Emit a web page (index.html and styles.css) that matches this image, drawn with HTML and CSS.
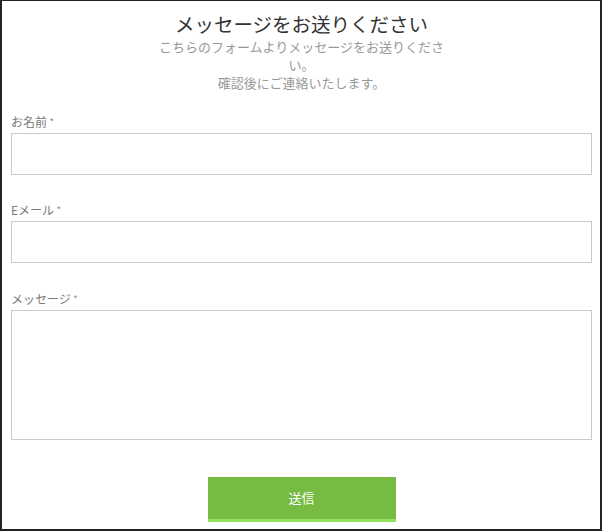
FILE: index.html
```html
<!DOCTYPE html>
<html lang="ja">
<head>
	<meta charset="UTF-8">
	<title>お問い合わせ</title>
	<link rel="stylesheet" href="styles.css">
</head>
<body>
	<div class="frame">
		<div class="head">
			<h1 class="title">メッセージをお送りください</h1>
			<p class="lead">こちらのフォームよりメッセージをお送りください。<br>確認後にご連絡いたします。</p>
		</div>

		<form class="contact">
			<div class="field">
				<label class="label" for="name">お名前<span class="req">*</span></label>
				<input class="input" type="text" id="name">
			</div>
			<div class="field">
				<label class="label" for="mail">Eメール<span class="req">*</span></label>
				<input class="input" type="email" id="mail">
			</div>
			<div class="field">
				<label class="label" for="msg">メッセージ<span class="req">*</span></label>
				<textarea class="input area" id="msg"></textarea>
			</div>
			<div class="actions">
				<button class="send" type="button">送信</button>
			</div>
		</form>
	</div>
</body>
</html>
```

FILE: styles.css
```css
html,body {
	margin: 0;
	padding: 0;
	background: #fff;
}
.frame {
	box-sizing: border-box;
	width: 602px;
	height: 531px;
	border: 2px solid #222;
	border-top-width: 1px;
	padding: 11px 8px 0 9px;
	font-family: "Noto Sans CJK JP", "Noto Sans", sans-serif;
}
.head {
	width: 294px;
	margin: 0 auto 21px;
	text-align: center;
}
.title {
	margin: 0;
	font-size: 19.5px;
	line-height: 24px;
	font-weight: normal;
	color: #333;
}
.lead {
	margin: 2px 0 0;
	font-size: 13px;
	line-height: 18px;
	color: #999;
}
.field {
	margin-bottom: 26px;
}
.field:nth-child(2) {
	margin-bottom: 27px;
}
.label {
	display: block;
	height: 18px;
	margin-bottom: 2px;
	font-size: 12px;
	line-height: 18px;
	color: #7a7a7a;
}
.req {
	margin-left: 3px;
	font-family: "Liberation Sans", sans-serif;
	font-size: 9px;
	line-height: 0;
	vertical-align: 3px;
	color: #888;
}
.input {
	display: block;
	box-sizing: border-box;
	width: 581px;
	height: 42px;
	margin: 0;
	border: 1px solid #cacaca;
	border-radius: 0;
	background: #fff;
	outline: none;
}
.area {
	height: 130px;
	resize: none;
}
.actions {
	margin-top: 37px;
	text-align: center;
}
.send {
	box-sizing: border-box;
	width: 188px;
	height: 45px;
	margin: 0;
	padding: 0;
	border: 0;
	border-bottom: 3px solid #8fe35c;
	background: #76bc43;
	color: #fff;
	font-family: "Noto Sans CJK JP", sans-serif;
	font-size: 13px;
	line-height: 42px;
}
```
